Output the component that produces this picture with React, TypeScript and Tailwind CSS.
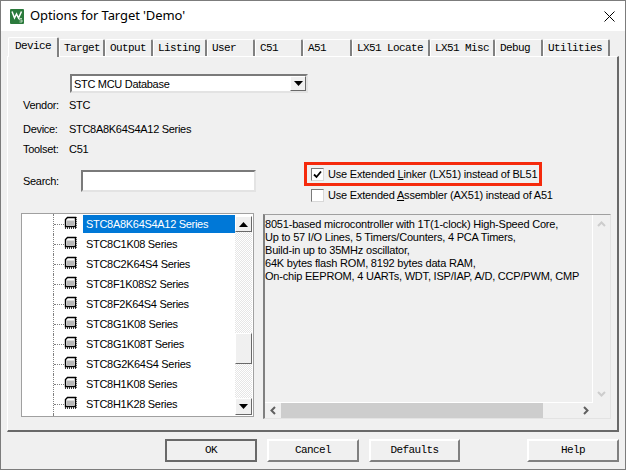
const sans = "font-['Liberation_Sans',sans-serif] text-[11px] tracking-[-0.3px] leading-[14px] text-black";
const mono = "font-['Liberation_Mono',monospace] text-[11px] tracking-[-0.6px] text-black";

const tabs = [
  { label: "Device", w: "w-[51px]" },
  { label: "Target", w: "w-[46px]" },
  { label: "Output", w: "w-[48px]" },
  { label: "Listing", w: "w-[54px]" },
  { label: "User", w: "w-[48px]" },
  { label: "C51", w: "w-[48px]" },
  { label: "A51", w: "w-[49px]" },
  { label: "LX51 Locate", w: "w-[78px]" },
  { label: "LX51 Misc", w: "w-[65px]" },
  { label: "Debug", w: "w-[48px]" },
  { label: "Utilities", w: "w-[67px]" },
];

const series = [
  "STC8A8K64S4A12 Series",
  "STC8C1K08 Series",
  "STC8C2K64S4 Series",
  "STC8F1K08S2 Series",
  "STC8F2K64S4 Series",
  "STC8G1K08 Series",
  "STC8G1K08T Series",
  "STC8G2K64S4 Series",
  "STC8H1K08 Series",
  "STC8H1K28 Series",
];

function KeilLogo() {
  return (
    <svg width="14" height="15" viewBox="0 0 14 15" className="ml-[9px] shrink-0">
      <rect width="14" height="15" rx="1" fill="#2b7a3c" />
      <path d="M2 2.5 L4.5 9 L6.5 5 L8.5 9 L11.5 2.5" fill="none" stroke="#fff" strokeWidth="1.5" />
      <path d="M12 9.5H9.5V11H12V13H9.5" fill="none" stroke="#d8ead8" strokeWidth="0.8" />
    </svg>
  );
}

function ChipIcon() {
  return (
    <svg width="13" height="13" viewBox="0 0 13 13" className="-mt-[3px] shrink-0">
      <path d="M3.5 1.5H11.5V10.5H1.5V3.5Z" fill="#fff" stroke="#000" strokeWidth="1.4" />
      <path d="M3 4.5H10V9H3Z" fill="#b8b8b8" />
      <path d="M1 12H12" stroke="#000" strokeWidth="1.6" strokeDasharray="1 1" />
      <path d="M12 1V12" stroke="#000" strokeWidth="1.2" strokeDasharray="1 1" />
    </svg>
  );
}

function Triangle({ down }: { down?: boolean }) {
  return (
    <svg width="9" height="5" viewBox="0 0 9 5">
      <path d={down ? "M0 0H9L4.5 5Z" : "M0 5H9L4.5 0Z"} fill="#000" />
    </svg>
  );
}

function Check({ checked }: { checked?: boolean }) {
  return (
    <span className="flex h-[13px] w-[13px] shrink-0 items-center justify-center border border-[#7a7a7a] border-r-[#d8d8d8] border-b-[#d8d8d8] bg-white">
      {checked && (
        <svg width="9" height="9" viewBox="0 0 9 9">
          <path d="M1 4.5L3.5 7L8 1.5" fill="none" stroke="#000" strokeWidth="1.8" />
        </svg>
      )}
    </span>
  );
}

function ScrollButton({ down, className }: { down?: boolean; className: string }) {
  return (
    <div className={`flex items-center justify-center border border-t-white border-l-white border-r-[#696969] border-b-[#696969] bg-[#f0f0f0] ${className}`}>
      <Triangle down={down} />
    </div>
  );
}

function Chevron({ d, color }: { d: string; color: string }) {
  return (
    <svg width="9" height="9" viewBox="0 0 9 9" className="shrink-0">
      <path d={d} fill="none" stroke={color} strokeWidth="2" />
    </svg>
  );
}

function DialogButton({ label, className, isDefault }: { label: string; className: string; isDefault?: boolean }) {
  return (
    <button
      className={`h-[23px] ${className} ${mono} flex items-center justify-center border-2 ${
        isDefault ? "border-[#696969]" : "border-t-white border-l-white border-r-[#808080] border-b-[#808080]"
      } bg-[#f0f0f0]`}
    >
      {label}
    </button>
  );
}

export default function App() {
  return (
    <div className="h-[470px] w-[626px] overflow-hidden border border-[#7c7c7c] bg-[#f0f0f0]">
      <div className="flex h-[30px] items-center bg-white">
        <KeilLogo />
        <span className="ml-[6px] font-['Noto_Sans',sans-serif] text-[13px] tracking-[-0.1px] text-black">Options for Target 'Demo'</span>
        <svg width="11" height="11" viewBox="0 0 11 11" className="ml-auto mr-[10px]">
          <path d="M0.5 0.5L10.5 10.5M10.5 0.5L0.5 10.5" stroke="#000" strokeWidth="1" />
        </svg>
      </div>

      <div className="ml-[7px] mt-[6px] flex h-[19px] items-end">
        {tabs.map((t, i) => (
          <div
            key={t.label}
            className={`flex items-center border-l border-t border-r-2 border-l-white border-t-white border-r-[#808080] rounded-t-[2px] ${mono} ${t.w} ${
              i === 0 ? "relative z-10 -mb-px -mt-px h-[20px] bg-[#f0f0f0] pb-[2px] pl-[6px]" : "h-[17px] pl-[4px]"
            }`}
          >
            {t.label}
          </div>
        ))}
      </div>

      <div className="ml-[6px] h-[376px] w-[612px] border-l border-t border-r-2 border-b-2 border-l-white border-t-white border-r-[#696969] border-b-[#696969]">
        <div className="ml-[62px] mt-[17px] flex h-[19px] w-[238px] items-center border-2 border-[#7a7a7a] border-r-[#e3e3e3] border-b-[#e3e3e3] bg-white pl-[2px]">
          <span className={`${sans} flex-1`}>STC MCU Database</span>
          <ScrollButton down className="h-[15px] w-[16px]" />
        </div>

        <div className="flex">
          <div className={`${sans} ml-[15px] w-[281px] shrink-0`}>
            <div className="mt-[4px] flex h-[16px] items-center"><span className="w-[46px]">Vendor:</span>STC</div>
            <div className="mt-[8px] flex h-[16px] items-center"><span className="w-[46px]">Device:</span>STC8A8K64S4A12 Series</div>
            <div className="mt-[4px] flex h-[16px] items-center"><span className="w-[46px]">Toolset:</span>C51</div>
            <div className="mt-[13px] flex h-[22px] items-center">
              <span className="w-[58px]">Search:</span>
              <span className="h-[22px] w-[175px] border-2 border-[#7a7a7a] border-r-[#e3e3e3] border-b-[#e3e3e3] bg-white" />
            </div>
          </div>
          <div className={`${sans} !tracking-[-0.2px]`}>
            <div className="mt-[69px] flex h-[24px] w-[238px] items-center gap-[4px] border-[3px] border-[#f52a0c] pl-[4px]">
              <Check checked />
              <span className="whitespace-nowrap">Use Extended <u>L</u>inker (LX51) instead of BL51</span>
            </div>
            <div className="mt-[2px] flex h-[14px] items-center gap-[4px] pl-[7px]">
              <Check />
              <span className="whitespace-nowrap">Use Extended <u>A</u>ssembler (AX51) instead of A51</span>
            </div>
          </div>
        </div>

        <div className="ml-[13px] mt-[11px] flex items-start">
          <div className="flex h-[204px] w-[233px] border border-[#a0a0a0] bg-white">
            <div className="w-[213px] overflow-hidden">
              {series.map((s, i) => (
                <div key={s} className="ml-[31px] flex h-[20px] items-center border-l border-dotted border-[#808080]">
                  <span className="w-[10px] border-t border-dotted border-[#808080]" />
                  <ChipIcon />
                  <span
                    className={`${sans} ml-[6px] flex h-[18px] flex-1 items-center whitespace-nowrap pl-[3px] ${
                      i === 0 ? "bg-[#0078d7] !text-white" : ""
                    }`}
                  >
                    {s}
                  </span>
                </div>
              ))}
              <div className="ml-[31px] h-[2px] border-l border-dotted border-[#808080]" />
            </div>
            <div className="flex w-[18px] flex-col pb-[1px] pr-[1px] pt-[2px]">
              <ScrollButton className="h-[16px] shrink-0" />
              <div className="h-[101px] bg-[repeating-conic-gradient(#fff_0_25%,#e6e6e6_0_50%)] bg-[length:2px_2px]" />
              <div className="h-[31px] border border-t-white border-l-white border-r-[#696969] border-b-[#696969] bg-[#f0f0f0]" />
              <div className="flex-1 bg-[repeating-conic-gradient(#fff_0_25%,#e6e6e6_0_50%)] bg-[length:2px_2px]" />
              <ScrollButton down className="h-[17px] shrink-0" />
            </div>
          </div>

          <div className="ml-[9px] mt-[1px] flex h-[205px] w-[348px] flex-col border-b border-l-2 border-r border-t border-b-[#e3e3e3] border-l-[#808080] border-r-[#e3e3e3] border-t-[#a0a0a0]">
            <div className="flex min-h-0 flex-1">
              <div className={`${sans} flex-1 overflow-hidden whitespace-nowrap border-b border-r border-white pt-[3px] !leading-[13px] !tracking-[-0.2px]`}>
                <div>8051-based microcontroller with 1T(1-clock) High-Speed Core,</div>
                <div>Up to 57 I/O Lines, 5 Timers/Counters, 4 PCA Timers,</div>
                <div>Build-in up to 35MHz oscillator,</div>
                <div>64K bytes flash ROM, 8192 bytes data RAM,</div>
                <div>On-chip EEPROM, 4 UARTs, WDT, ISP/IAP, A/D, CCP/PWM, CMP</div>
              </div>
              <div className="flex w-[17px] shrink-0 flex-col items-center justify-between py-[5px]">
                <Chevron d="M1 6L4.5 2.5L8 6" color="#cdcdcd" />
                <Chevron d="M1 3L4.5 6.5L8 3" color="#cdcdcd" />
              </div>
            </div>
            <div className="flex h-[15px] shrink-0 items-center">
              <div className="flex w-[16px] justify-center">
                <Chevron d="M6 1L2.5 4.5L6 8" color="#606060" />
              </div>
              <div className="h-[15px] w-[262px] bg-[#cdcdcd]" />
              <div className="flex flex-1 justify-end pr-[20px]">
                <Chevron d="M3 1L6.5 4.5L3 8" color="#606060" />
              </div>
            </div>
          </div>
        </div>
      </div>

      <div className="ml-[164px] mt-[7px] flex">
        <DialogButton label="OK" className="w-[92px]" isDefault />
        <DialogButton label="Cancel" className="ml-[10px] w-[92px]" />
        <DialogButton label="Defaults" className="ml-[10px] w-[91px]" />
        <DialogButton label="Help" className="ml-[67px] w-[92px]" />
      </div>
    </div>
  );
}
